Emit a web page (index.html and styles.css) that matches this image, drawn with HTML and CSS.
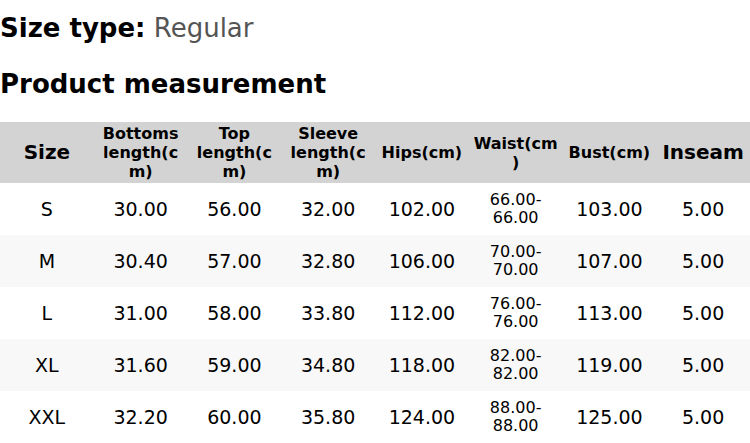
FILE: index.html
```html
<!DOCTYPE html>
<html>
<head>
<meta charset="utf-8">
<link rel="stylesheet" href="styles.css">
</head>
<body>
<div class="page">
  <p class="size-type"><span class="label">Size type:</span> <span class="value">Regular</span></p>
  <h2 class="section-title">Product measurement</h2>
  <table class="measure">
    <thead>
      <tr>
        <th class="big">Size</th>
        <th>Bottoms length(cm)</th>
        <th>Top length(cm)</th>
        <th>Sleeve length(cm)</th>
        <th>Hips(cm)</th>
        <th>Waist(cm)</th>
        <th>Bust(cm)</th>
        <th class="big">Inseam</th>
      </tr>
    </thead>
    <tbody>
      <tr><td>S</td><td>30.00</td><td>56.00</td><td>32.00</td><td>102.00</td><td class="range">66.00-66.00</td><td>103.00</td><td>5.00</td></tr>
      <tr><td>M</td><td>30.40</td><td>57.00</td><td>32.80</td><td>106.00</td><td class="range">70.00-70.00</td><td>107.00</td><td>5.00</td></tr>
      <tr><td>L</td><td>31.00</td><td>58.00</td><td>33.80</td><td>112.00</td><td class="range">76.00-76.00</td><td>113.00</td><td>5.00</td></tr>
      <tr><td>XL</td><td>31.60</td><td>59.00</td><td>34.80</td><td>118.00</td><td class="range">82.00-82.00</td><td>119.00</td><td>5.00</td></tr>
      <tr><td>XXL</td><td>32.20</td><td>60.00</td><td>35.80</td><td>124.00</td><td class="range">88.00-88.00</td><td>125.00</td><td>5.00</td></tr>
    </tbody>
  </table>
</div>
</body>
</html>
```

FILE: styles.css
```css
html, body {
  margin: 0;
  padding: 0;
  background: #ffffff;
}
body {
  font-family: "DejaVu Sans", sans-serif;
  color: #000;
}
.page {
  padding-top: 13px;
}
.size-type {
  margin: 0;
  font-size: 26px;
  line-height: 30px;
}
.size-type .label {
  font-weight: bold;
}
.size-type .value {
  color: #555555;
}
.section-title {
  margin: 26px 0 0 0;
  font-size: 26px;
  line-height: 30px;
  font-weight: bold;
}
.measure {
  margin-top: 23px;
  width: 750px;
  border-collapse: collapse;
  table-layout: fixed;
}
.measure th {
  background: #d3d3d3;
  font-size: 16px;
  line-height: 19px;
  height: 61px;
  padding: 0 4px;
  box-sizing: border-box;
  font-weight: bold;
  text-align: center;
  vertical-align: middle;
  overflow-wrap: anywhere;
}
.measure th.big {
  font-size: 20px;
}
.measure td {
  height: 52px;
  padding: 0 4px;
  box-sizing: border-box;
  font-size: 19px;
  text-align: center;
  vertical-align: middle;
}
.measure td.range {
  font-size: 16px;
  line-height: 18px;
}
.measure tbody tr:nth-child(even) {
  background: #f8f8f8;
}
```
